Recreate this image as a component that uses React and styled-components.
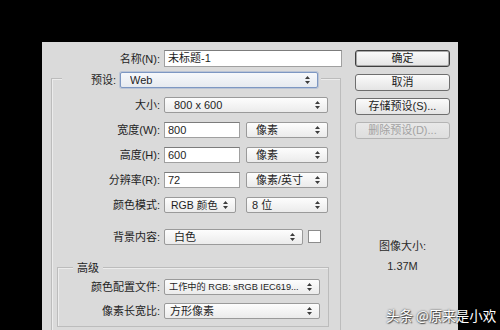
import React from "react";
import styled, { createGlobalStyle } from "styled-components";

const GlobalStyle = createGlobalStyle`
  html, body { margin: 0; padding: 0; background: #000; }
  body {
    width: 500px; height: 330px; overflow: hidden;
    font-family: "Liberation Sans", "Noto Sans CJK SC", sans-serif;
  }
`;

const Screen = styled.div`
  position: relative;
  width: 500px;
  height: 330px;
  overflow: hidden;
  background: #000;
  padding: 42px 0 0 42px;
  box-sizing: border-box;
`;

const Dialog = styled.div`
  width: 416px;
  height: 320px;
  background: #dadada;
  display: flex;
  align-items: flex-start;
  padding-top: 8px;
  box-sizing: border-box;
  font-size: 11px;
  color: #1e1e1e;
`;

const LeftCol = styled.div`
  width: 299px;
  padding-left: 9px;
  box-sizing: border-box;
  display: flex;
  flex-direction: column;
`;

const RightCol = styled.div`
  width: 95px;
  margin-left: 14px;
  display: flex;
  flex-direction: column;
  gap: 7px;
`;

const Row = styled.div`
  display: grid;
  grid-template-columns: ${(p) => p.$label}px auto;
  column-gap: 4px;
  align-items: center;
  height: ${(p) => p.$h || 16}px;
  margin-top: ${(p) => p.$mt || 0}px;
`;

const Label = styled.span`
  text-align: right;
  white-space: nowrap;
  line-height: 14px;
`;

const Fields = styled.div`
  display: flex;
  align-items: center;
  gap: ${(p) => p.$gap || 6}px;
`;

const Input = styled.div`
  width: ${(p) => p.$w}px;
  height: ${(p) => p.$h || 16}px;
  box-sizing: border-box;
  background: #fff;
  border: 1px solid #a0a0a0;
  border-top-color: #7c7c7c;
  padding-left: 3px;
  line-height: ${(p) => (p.$h || 16) - 2}px;
  white-space: nowrap;
  overflow: hidden;
`;

const SelectBox = styled.div`
  position: relative;
  width: ${(p) => p.$w}px;
  height: 16px;
  box-sizing: border-box;
  border: 1px solid ${(p) => (p.$focus ? "#7d97c2" : "#9a9a9a")};
  border-radius: 2px;
  background: ${(p) =>
    p.$focus
      ? "linear-gradient(#f6f8fb, #e6eaf0)"
      : "linear-gradient(#fdfdfd, #ebebeb)"};
  box-shadow: ${(p) => (p.$focus ? "0 0 0 1px rgba(125,155,205,0.35)" : "none")};
  padding-left: ${(p) => p.$pl || 9}px;
  padding-right: 13px;
`;

const SelectText = styled.div`
  font-size: ${(p) => p.$fs || 11}px;
  line-height: 14px;
  white-space: nowrap;
  overflow: hidden;
`;

const Arrows = styled.svg`
  position: absolute;
  right: 7px;
  top: 3px;
`;

const Select = ({ w, focus, pl, fs, children }) => (
  <SelectBox $w={w} $focus={focus} $pl={pl}>
    <SelectText $fs={fs}>{children}</SelectText>
    <Arrows width="5" height="8" viewBox="0 0 5 8">
      <path d="M2.5 0 L5 3 L0 3 Z M0 5 L5 5 L2.5 8 Z" fill="#3c3c3c" />
    </Arrows>
  </SelectBox>
);

const Swatch = styled.div`
  width: 13px;
  height: 13px;
  box-sizing: border-box;
  background: #fff;
  border: 1px solid #8c8c8c;
`;

const Group = styled.div`
  margin-top: 11px;
  border: 1px solid #bcbcbc;
  border-bottom: none;
  box-shadow: inset 1px 1px 0 #ececec;
  height: 270px;
  display: flex;
  flex-direction: column;
`;

const Legend = styled.div`
  align-self: flex-start;
  margin-top: ${(p) => p.$mt}px;
  margin-left: ${(p) => p.$ml}px;
  padding: 0 ${(p) => p.$pad}px;
  background: #dadada;
  display: flex;
  align-items: center;
  gap: 4px;
  line-height: 14px;
`;

const LegendLabel = styled.span`
  width: ${(p) => p.$w}px;
  text-align: right;
`;

const Rows = styled.div`
  display: flex;
  flex-direction: column;
  gap: ${(p) => p.$gap}px;
  padding-top: ${(p) => p.$pt}px;
  padding-bottom: ${(p) => p.$pb || 0}px;
`;

const SubGroup = styled.div`
  margin-top: 22px;
  margin-left: 5px;
  width: 272px;
  box-sizing: border-box;
  border: 1px solid #bcbcbc;
  box-shadow: inset 1px 1px 0 #ececec;
  display: flex;
  flex-direction: column;
`;

const Button = styled.div`
  height: 17px;
  box-sizing: border-box;
  border: 1px solid ${(p) => (p.$disabled ? "#b4b4b4" : p.$default ? "#3e3e3e" : "#6e6e6e")};
  border-radius: 3px;
  background: ${(p) =>
    p.$disabled ? "linear-gradient(#e8e8e8, #dedede)" : "linear-gradient(#fbfbfb, #e4e4e4)"};
  box-shadow: ${(p) => (p.$default ? "inset 0 0 0 1px #a8a8a8" : "none")};
  color: ${(p) => (p.$disabled ? "#a2a2a2" : "#1e1e1e")};
  text-align: center;
  line-height: 15px;
  white-space: nowrap;
`;

const Info = styled.div`
  margin-top: 93px;
  text-align: center;
  line-height: 14px;
  color: #2a2a2a;
`;

const InfoValue = styled.div`
  margin-top: 6px;
`;

const Watermark = styled.div`
  position: absolute;
  left: 386px;
  top: 306px;
  font-family: "Noto Sans CJK SC", sans-serif;
  font-size: 13.5px;
  line-height: 18px;
  color: #fff;
  text-shadow: 0 0 2px rgba(0, 0, 0, 0.8), 1px 1px 1px rgba(0, 0, 0, 0.6);
  white-space: nowrap;
`;

export default function App() {
  return (
    <>
      <GlobalStyle />
      <Screen>
        <Dialog>
          <LeftCol>
            <Row $label={109} $h={17}>
              <Label>名称(N):</Label>
              <Input $w={178} $h={17}>未标题-1</Input>
            </Row>
            <Group>
              <Legend $mt={-7} $ml={10} $pad={3}>
                <LegendLabel $w={51}>预设:</LegendLabel>
                <Select w={198} focus>Web</Select>
              </Legend>
              <Rows $gap={9} $pt={9}>
                <Row $label={108}>
                  <Label>大小:</Label>
                  <Select w={164}>800 x 600</Select>
                </Row>
                <Row $label={108}>
                  <Label>宽度(W):</Label>
                  <Fields>
                    <Input $w={76}>800</Input>
                    <Select w={82}>像素</Select>
                  </Fields>
                </Row>
                <Row $label={108}>
                  <Label>高度(H):</Label>
                  <Fields>
                    <Input $w={76}>600</Input>
                    <Select w={82}>像素</Select>
                  </Fields>
                </Row>
                <Row $label={108}>
                  <Label>分辨率(R):</Label>
                  <Fields>
                    <Input $w={76}>72</Input>
                    <Select w={82}>像素/英寸</Select>
                  </Fields>
                </Row>
                <Row $label={108}>
                  <Label>颜色模式:</Label>
                  <Fields $gap={10}>
                    <Select w={72} pl={6} fs={10.5}>RGB 颜色</Select>
                    <Select w={82} pl={5}>8 位</Select>
                  </Fields>
                </Row>
                <Row $label={108} $mt={6} $h={17}>
                  <Label>背景内容:</Label>
                  <Fields $gap={5}>
                    <Select w={139}>白色</Select>
                    <Swatch />
                  </Fields>
                </Row>
              </Rows>
              <SubGroup>
                <Legend $mt={-7} $ml={15} $pad={4}>
                  高级
                </Legend>
                <Rows $gap={8} $pt={4} $pb={7}>
                  <Row $label={102}>
                    <Label>颜色配置文件:</Label>
                    <Select w={156} pl={4} fs={9.2}>工作中的 RGB: sRGB IEC619...</Select>
                  </Row>
                  <Row $label={102}>
                    <Label>像素长宽比:</Label>
                    <Select w={156} pl={5}>方形像素</Select>
                  </Row>
                </Rows>
              </SubGroup>
            </Group>
          </LeftCol>
          <RightCol>
            <Button $default>确定</Button>
            <Button>取消</Button>
            <Button>存储预设(S)...</Button>
            <Button $disabled>删除预设(D)...</Button>
            <Info>
              <div>图像大小:</div>
              <InfoValue>1.37M</InfoValue>
            </Info>
          </RightCol>
        </Dialog>
        <Watermark>头条 @原来是小欢</Watermark>
      </Screen>
    </>
  );
}
